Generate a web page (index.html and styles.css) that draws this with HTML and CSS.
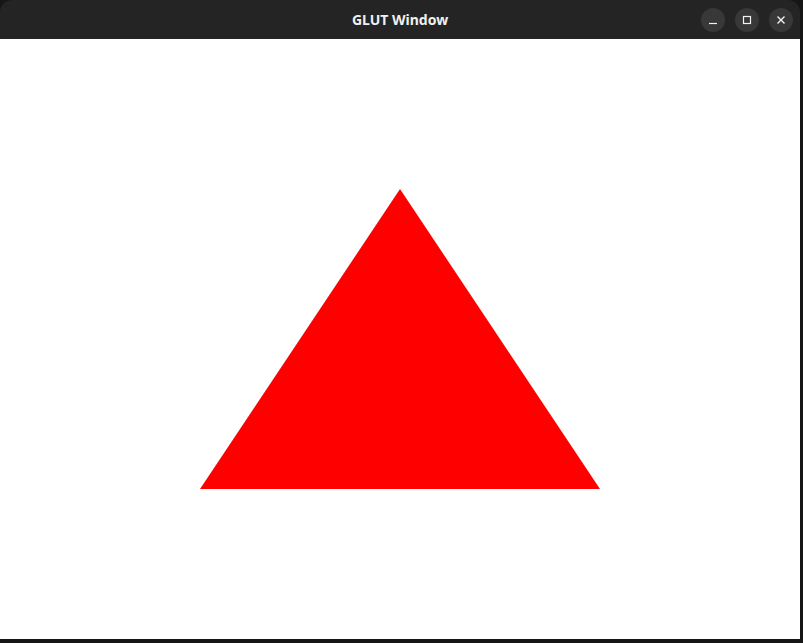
FILE: index.html
```html
<!DOCTYPE html>
<html>
<head>
<meta charset="utf-8">
<link rel="stylesheet" href="styles.css">
</head>
<body>
<div class="window">
  <div class="titlebar">
    <div class="title">GLUT Window</div>
    <div class="controls">
      <div class="btn"><svg width="24" height="24" viewBox="0 0 24 24"><path d="M8 15.5h8" stroke="#f2f2f2" stroke-width="1.2"/></svg></div>
      <div class="btn"><svg width="24" height="24" viewBox="0 0 24 24"><rect x="8.5" y="8.5" width="7" height="7" fill="none" stroke="#f2f2f2" stroke-width="1.2"/></svg></div>
      <div class="btn"><svg width="24" height="24" viewBox="0 0 24 24"><path d="M8.5 8.5l7 7M15.5 8.5l-7 7" stroke="#f2f2f2" stroke-width="1.4"/></svg></div>
    </div>
  </div>
  <div class="content">
    <svg class="canvas" width="800" height="600" viewBox="0 0 800 600"><polygon points="400,150 200,450 600,450" fill="#ff0000"/></svg>
  </div>
</div>
</body>
</html>
```
FILE: styles.css
```css
html, body {
  margin: 0;
  padding: 0;
  background: #161616;
  width: 803px;
  height: 643px;
  overflow: hidden;
}
.window {
  width: 800px;
  height: 639px;
  display: flex;
  flex-direction: column;
}
.titlebar {
  height: 39px;
  background: #242424;
  border-radius: 12px 12px 0 0;
  position: relative;
  display: flex;
  align-items: center;
  justify-content: flex-end;
  flex-shrink: 0;
}
.title {
  position: absolute;
  left: 0;
  right: 0;
  top: 0;
  height: 39px;
  line-height: 40px;
  text-align: center;
  color: #f0f0f0;
  font-family: "Noto Sans", "DejaVu Sans", sans-serif;
  font-weight: 700;
  font-size: 14px;
}
.controls {
  display: flex;
  gap: 10px;
  padding-right: 7px;
  position: relative;
}
.btn {
  width: 24px;
  height: 24px;
  border-radius: 50%;
  background: #383838;
}
.btn svg { display: block; }
.content {
  flex: 1;
  background: #ffffff;
}
.canvas { display: block; }
```
